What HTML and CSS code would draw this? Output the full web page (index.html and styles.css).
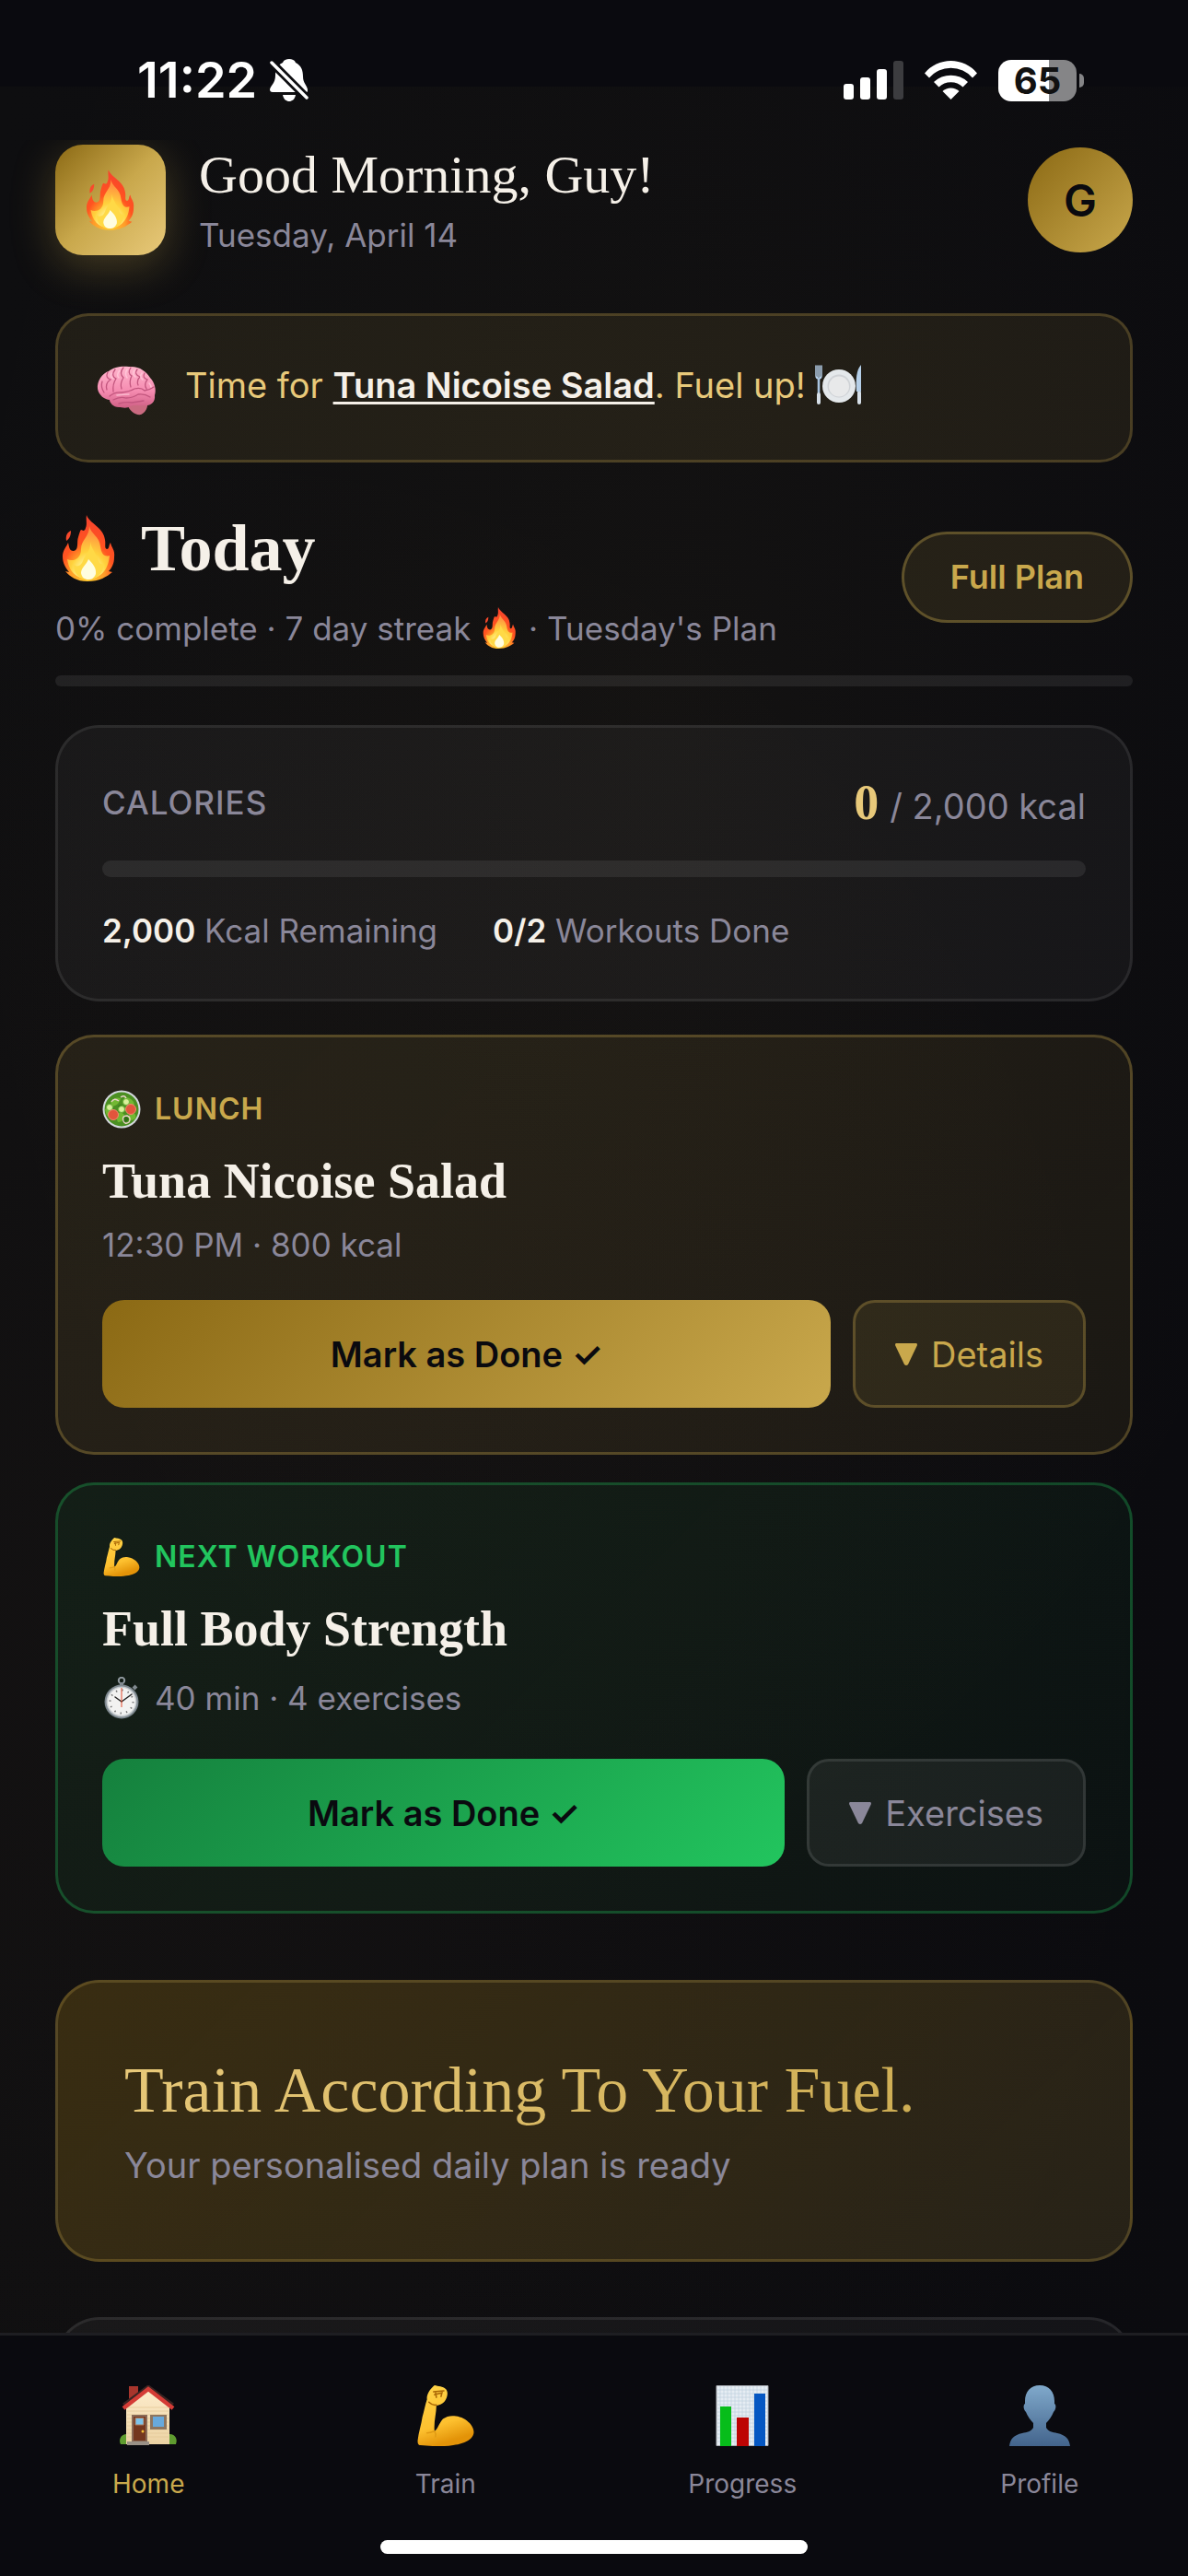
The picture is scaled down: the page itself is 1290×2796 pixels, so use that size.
FILE: index.html
```html
<!DOCTYPE html>
<html lang="en">

<head>
    <meta charset="UTF-8">
    <meta name="viewport" content="width=device-width, initial-scale=1.0">
    <title>Today</title>

    <link rel="stylesheet" href="styles.css">
</head>

<body>
    <!-- shared pictograms -->
    <svg class="defs" width="0" height="0" aria-hidden="true">
        <defs>
            <radialGradient id="fire-outer" cx="0.48" cy="0.92" r="0.85">
                <stop offset="0" stop-color="#ffd030" />
                <stop offset="0.4" stop-color="#ff9a28" />
                <stop offset="0.6" stop-color="#ff5420" />
                <stop offset="1" stop-color="#f8442c" />
            </radialGradient>
            <radialGradient id="fire-inner" cx="0.5" cy="0.93" r="0.8">
                <stop offset="0" stop-color="#fffff0" />
                <stop offset="0.25" stop-color="#fff59a" />
                <stop offset="0.55" stop-color="#ffd23c" />
                <stop offset="1" stop-color="#ff9440" />
            </radialGradient>
            <linearGradient id="skin" x1="0" y1="0" x2="0.3" y2="1">
                <stop offset="0" stop-color="#ffd54a" />
                <stop offset="0.7" stop-color="#fdc02f" />
                <stop offset="1" stop-color="#e39308" />
            </linearGradient>
            <linearGradient id="brain-fill" x1="0" y1="0" x2="0" y2="1">
                <stop offset="0" stop-color="#ffb6cd" />
                <stop offset="0.6" stop-color="#f58bb0" />
                <stop offset="1" stop-color="#cf5f85" />
            </linearGradient>
            <linearGradient id="bust" x1="0" y1="0" x2="0" y2="1">
                <stop offset="0" stop-color="#80a9cb" />
                <stop offset="1" stop-color="#43648c" />
            </linearGradient>
            <linearGradient id="wall" x1="0" y1="0" x2="0" y2="1">
                <stop offset="0" stop-color="#fdeccb" />
                <stop offset="1" stop-color="#ecd3a4" />
            </linearGradient>
        </defs>
        <symbol id="fire" viewBox="0 0 57 72">
            <path fill="url(#fire-outer)" d="M26 0C29 9 45 14 46 27C47 32 45 36 48 37C51 37 50 32 52 30C53 36 57 37 56 46C56 53 53 58 50 61L54 62C48 67 40 72 27 72C15 72 8 67 3 61L7 62C3 57 0 52 0 45C0 38 4 35 6 30C7 34 7 39 12 39C18 38 15 29 17 24C18 20 19 17 20 16C22 17 24 18 25 14C27 10 25 5 26 0Z" />
            <path fill="#f8492c" d="M9 17C5 19 3 22 4 28C7 26 9 23 9 17Z" />
            <path fill="url(#fire-inner)" d="M29 12C30 20 40 23 41 34C42 42 45 46 51 44C50 56 44 69 28 69C13 69 7 60 5 48C11 51 20 48 20 37C20 27 29 24 29 12Z" />
            <path fill="#ffd946" d="M30 29C31 37 38 43 39 50C41 55 45 53 45 53C44 63 38 70 28 70C18 70 12 64 12 54C16 57 20 55 22 50C24 43 31 39 30 29Z" />
            <path fill="#fffde0" d="M28 48C32 52 37 57 36 64C34 69 31 70 28 70C24 70 21 68 20 63C20 57 26 54 28 48Z" />
        </symbol>
        <symbol id="bicep" viewBox="0 0 60 65">
            <path fill="url(#skin)" d="M18 0C22 1 27 1 30 4C33 7 32 13 29 17C26 21 22 21 20 22C20 30 17 40 18 49C21 48 23 40 27 36C31 33 36 32 41 33C50 34 60 42 60 50C60 58 49 63 38 64C26 66 13 65 3 64C0 64 0 61 0 59C1 50 4 42 5 34C7 27 8 21 10 15C9 10 14 3 18 0Z" />
            <path fill="none" stroke="#a86404" stroke-width="1.5" stroke-linecap="round" d="M17 7L28 6M18 10L26 8L25 12M19 7L20 13M12 18Q16 22 20 21" />
            <path fill="none" stroke="#e09a14" stroke-width="1.5" stroke-linecap="round" d="M18 49Q13 51 10 51M18 49Q20 52 19 55" />
        </symbol>
        <symbol id="brain" viewBox="0 0 66 60">
            <path fill="#c96a80" d="M33 46C35 54 42 59 48 58C53 56 56 50 55 44Z" />
            <path fill="url(#brain-fill)" d="M1 30C0 22 6 13 13 11C18 6 28 5 35 6C46 5 54 11 58 18C63 23 65 31 63 37C64 45 58 49 51 48C46 49 41 47 37 49C32 52 27 50 24 50C18 50 14 45 14 42C9 42 2 37 1 30Z" />
            <path fill="none" stroke="#c2567e" stroke-width="1.3" stroke-linecap="round" d="M12 12Q9 18 15 20Q9 24 11 31M20 9Q15 16 21 19Q17 25 18 33M29 7Q24 13 29 18Q25 24 27 30M37 7Q33 13 38 16Q35 22 37 28M44 9Q40 14 47 17Q43 21 45 26M52 13Q49 18 55 20Q51 25 54 30M14 38Q20 33 27 34Q36 33 41 30Q48 28 52 32Q58 31 62 28M18 42Q25 38 32 40Q39 40 45 36Q52 35 58 39M24 46Q32 44 38 45Q45 44 51 43M6 22Q4 28 8 34" />
            <path fill="none" stroke="#ffd0de" stroke-width="1.6" stroke-linecap="round" opacity="0.7" d="M16 13Q14 17 18 19M25 10Q21 15 24 18M33 9Q30 14 33 18M41 10Q38 14 42 17M49 13Q46 17 50 20M22 37Q30 36 35 36M57 24Q59 26 59 28" />
        </symbol>
        <symbol id="plate" viewBox="0 0 52 44">
            <circle cx="26" cy="23" r="18" fill="#e4e8eb" />
            <circle cx="26" cy="23" r="12.5" fill="#cfd2d6" />
            <circle cx="26" cy="23.5" r="11" fill="#e8e9ea" />
            <path fill="none" stroke="#b9d3ee" stroke-width="1.4" stroke-linecap="round" d="M1 1V12Q1 15 4 15Q7 15 7 12V1M3 1V14M5 1V14" />
            <path fill="none" stroke="#a9c4e0" stroke-width="2.6" stroke-linecap="round" d="M4 16V30" />
            <path fill="none" stroke="#d6dfe8" stroke-width="4" stroke-linecap="round" d="M4 32V41M48 30V41" />
            <path fill="#b5cfe8" d="M50 0C45 5 44 16 45 29H50Z" />
        </symbol>
        <symbol id="salad" viewBox="0 0 42 42">
            <circle cx="21" cy="21" r="20.5" fill="#d4d8dd" />
            <circle cx="21" cy="21" r="18.5" fill="#4b8f22" />
            <path fill="#72b832" d="M9 13Q14 7 20 9Q19 16 11 18ZM24 8Q33 8 35 16Q28 19 24 13ZM14 27Q20 22 24 27Q24 35 17 35ZM30 25Q38 24 36 31Q31 35 28 31ZM3 21Q9 18 10 23Q9 28 5 28Z" />
            <path fill="#2f6f16" d="M17 18Q21 14 23 19Q20 22 17 18ZM22 31Q26 27 29 31Q27 36 22 35ZM8 18Q12 18 13 22Q10 23 8 18Z" />
            <g fill="#d8f09a" stroke="#6bb03a">
                <circle cx="8" cy="19" r="3.5" />
                <circle cx="26" cy="13" r="3.5" />
                <circle cx="21" cy="21" r="3.5" />
            </g>
            <g fill="#e2553c" stroke="#f08a6a">
                <circle cx="12" cy="27" r="5.5" />
                <circle cx="31" cy="21" r="5.5" />
            </g>
            <path fill="none" stroke="#ecd3cb" stroke-width="1.4" d="M10 13Q13 8 18 12M20 8Q24 5 26 9M23 34Q21 28 27 28Q32 30 29 35Q25 38 23 34" />
        </symbol>
        <symbol id="stopwatch" viewBox="0 0 40 46">
            <circle cx="20" cy="4" r="3.2" fill="none" stroke="#8f989e" stroke-width="2" />
            <path fill="none" stroke="#818a90" stroke-width="4" d="M20 6V10M33 13L36 10" />
            <circle cx="20" cy="27" r="18.5" fill="#7d878e" />
            <circle cx="20" cy="27" r="16.5" fill="#c5cacd" />
            <circle cx="20" cy="27" r="15" fill="#f2f2f1" />
            <circle cx="20" cy="27" r="12.5" fill="none" stroke="#777" stroke-width="2" stroke-dasharray="1.4 5.14" />
            <path fill="none" stroke="#222" stroke-width="1.5" stroke-linecap="round" d="M20 27L13 22M20 27L31 19" />
            <path fill="none" stroke="#e5482a" d="M20 33V12" />
        </symbol>
        <symbol id="house" viewBox="0 0 66 66">
            <path fill="#a8352c" d="M12 1H22V14L12 21Z" />
            <path fill="url(#wall)" d="M9 22L33 5L56 22V64H9Z" />
            <path fill="none" stroke="#e2c595" stroke-width="0.7" d="M10 24H55M10 28H55M10 32H55M10 36H55M10 40H55M10 44H55M10 48H55M10 52H55M10 56H55" />
            <path fill="none" stroke="#3a2422" stroke-width="3" d="M6 21L33 1L60 21" />
            <path fill="none" stroke="#d43c36" stroke-width="4.5" d="M6 25L33 4L60 25" />
            <path fill="#8a6b58" d="M15 32H32V61H15Z" />
            <path fill="#74371f" d="M17 34H30V60H17Z" />
            <path fill="#7ec3ea" stroke="#a9795a" d="M19 35.500H28V43H19Z" />
            <circle cx="27" cy="50" r="1.500" fill="#f3c03a" />
            <path fill="#8d755f" d="M35 32H53V48H35Z" />
            <path fill="#68a9dc" d="M38 34H50V45H38Z" />
            <path fill="#9a9187" d="M10 61H34V65H10Z" />
            <path fill="#5f9c30" d="M9 53V64H3C1 60 2 54 9 53ZM56 53V64H63C65 59 63 53 56 53Z" />
        </symbol>
        <symbol id="chart" viewBox="0 0 66 66">
            <path fill="#e6edf3" stroke="#a9adb3" d="M5 0.500H61V65.500H5Z" />
            <path fill="none" stroke="#c3d3df" stroke-width="0.8" d="M9 1V65M13 1V65M17 1V65M21 1V65M25 1V65M29 1V65M33 1V65M37 1V65M41 1V65M45 1V65M49 1V65M53 1V65M57 1V65M6 5H60M6 9H60M6 13H60M6 17H60M6 21H60M6 25H60M6 29H60M6 33H60M6 37H60M6 41H60M6 45H60M6 49H60M6 53H60M6 57H60M6 61H60" />
            <path fill="#07bd1a" d="M9 23H21V66H9Z" />
            <path fill="#bd0404" d="M27 35H40V66H27Z" />
            <path fill="#0557c2" d="M46 9H58V66H46Z" />
        </symbol>
        <symbol id="person" viewBox="0 0 66 66">
            <path fill="url(#bust)" d="M33 0C43 0 49 7 49 17V20C51 21 51 26 48 29C46 34 43 38 40 41V46C42 50 47 51 52 52C61 54 65 58 66 66H0C1 58 5 54 14 52C19 51 24 50 26 46V41C23 38 20 34 18 29C15 26 15 21 17 20V17C17 7 23 0 33 0Z" />
        </symbol>
    </svg>

    <div class="statusbar">
        <div class="status-group">
            <time class="clock">11:22</time>
            <svg class="bell" viewBox="0 0 42 46" fill="#fff" role="img" aria-label="Silent">
                <path d="M14 4C15 1 18 0 21 0C24 0 27 1 28 4C34 7 36 12 36 19C36 26 40 28 41 33C41 35 41 36 40 36H3C1 36 0 35 0 33C1 29 6 26 6 18C6 11 9 6 14 4Z" />
                <path d="M14 39H28C27 44 24 46 21 46C18 46 15 44 14 39Z" />
                <path stroke="#0c0c0f" stroke-width="9" d="M2 4L40 42" />
                <path stroke="#fff" stroke-width="3.500" stroke-linecap="round" d="M2 4L40 42" />
            </svg>
        </div>
        <div class="status-group status-right">
            <svg class="signal" viewBox="0 0 65 42" fill="#fff" role="img" aria-label="Signal">
                <rect y="25" width="11" height="17" rx="3" />
                <rect x="18" y="18" width="11" height="24" rx="3" />
                <rect x="36" y="9" width="11" height="33" rx="3" />
                <rect x="54" width="11" height="42" rx="3" fill="#3c3c3f" />
            </svg>
            <svg class="wifi" viewBox="0 0 57 42" fill="#fff" role="img" aria-label="Wi-Fi">
                <path d="M0 13.500A37 37 0 0 1 57 13.500L52 18.500A31 31 0 0 0 5 18.500Z" />
                <path d="M10 23A27 27 0 0 1 47 23L41.500 28.500A19 19 0 0 0 15.500 28.500Z" />
                <path d="M19.500 33A13 13 0 0 1 37.500 33L28.500 42Z" />
            </svg>
            <div class="battery"><span class="battery-level">65</span></div>
        </div>
    </div>

    <main>
        <header class="greeting">
            <div class="logo"><svg class="logo-icon"><use href="#fire" /></svg></div>
            <div class="greeting-text">
                <h1>Good Morning, Guy!</h1>
                <p class="muted">Tuesday, April 14</p>
            </div>
            <button class="avatar" type="button" aria-label="Account">G</button>
        </header>

        <section class="tip">
            <svg class="tip-icon"><use href="#brain" /></svg>
            <p>Time for <a href="#lunch">Tuna Nicoise Salad</a>. Fuel up! <svg class="plate"><use href="#plate" /></svg></p>
        </section>

        <section class="today">
            <div class="today-text">
                <h2><svg class="today-icon"><use href="#fire" /></svg>Today</h2>
                <p class="muted">0% complete · 7 day streak <svg class="streak-icon"><use href="#fire" /></svg> · Tuesday's Plan</p>
            </div>
            <button class="full-plan" type="button">Full Plan</button>
        </section>
        <div class="progress" role="progressbar" aria-valuenow="0" aria-label="Day progress"></div>

        <section class="card calories">
            <div class="calories-head">
                <span class="calories-label">CALORIES</span>
                <div class="calories-value"><strong>0</strong><span>/ 2,000 kcal</span></div>
            </div>
            <div class="calories-bar" role="progressbar" aria-valuenow="0" aria-label="Calories eaten"></div>
            <div class="stats">
                <span><b>2,000</b> Kcal Remaining</span>
                <span><b>0/2</b> Workouts Done</span>
            </div>
        </section>

        <section class="card lunch" id="lunch">
            <p class="label"><svg class="label-icon"><use href="#salad" /></svg>LUNCH</p>
            <h3>Tuna Nicoise Salad</h3>
            <p class="meta">12:30 PM · 800 kcal</p>
            <div class="actions">
                <button class="done" type="button">Mark as Done ✓</button>
                <button class="more" type="button"><svg class="triangle" viewBox="0 0 24 24"><path d="M1 0H23Q24 0 24 2L14 23Q12 25 10 23L0 2Q0 0 1 0Z" /></svg>Details</button>
            </div>
        </section>

        <section class="card workout">
            <p class="label"><svg class="label-icon"><use href="#bicep" /></svg>NEXT WORKOUT</p>
            <h3>Full Body Strength</h3>
            <p class="meta meta-icon"><svg class="watch"><use href="#stopwatch" /></svg>40 min · 4 exercises</p>
            <div class="actions">
                <button class="done" type="button">Mark as Done ✓</button>
                <button class="more" type="button"><svg class="triangle" viewBox="0 0 24 24"><path d="M1 0H23Q24 0 24 2L14 23Q12 25 10 23L0 2Q0 0 1 0Z" /></svg>Exercises</button>
            </div>
        </section>

        <section class="hero">
            <h2>Train According To Your Fuel.</h2>
            <p>Your personalised daily plan is ready</p>
        </section>

        <section class="card next-card"></section>
    </main>

    <nav class="tabbar">
        <div class="tabs">
            <a class="active" href="#home"><svg><use href="#house" /></svg>Home</a>
            <a href="#train"><svg><use href="#bicep" /></svg>Train</a>
            <a href="#progress"><svg><use href="#chart" /></svg>Progress</a>
            <a href="#profile"><svg><use href="#person" /></svg>Profile</a>
        </div>
        <div class="home-indicator"></div>
    </nav>
</body>

</html>
```
FILE: styles.css
```css
:root {
    --bg: #0a0a0f;
    --cream: #f5f0e8;
    --muted: #8a8799;
    --gold: #c9a84c;
    --gold-light: #e8c97a;
    --gold-dark: #8b6914;
    --green: #22c55e;
    --serif: 'Liberation Serif', 'Times New Roman', serif;
}

* {
    box-sizing: border-box;
    margin: 0;
}

body {
    display: flex;
    flex-direction: column;
    height: 100vh;
    overflow: hidden;
    font-family: Inter, sans-serif;
    font-size: 35px;
    line-height: 54px;
    color: var(--cream);
    background:
        linear-gradient(var(--bg), var(--bg)) 0 0 / 100% 94px no-repeat,
        radial-gradient(ellipse 60% 45% at 55% 28%, rgba(201, 168, 76, 0.04), transparent),
        radial-gradient(ellipse 80% 50% at 20% 65%, rgba(201, 140, 76, 0.03), transparent),
        linear-gradient(90deg, #0e0e10, #0b0b0f);
}

button {
    font-family: inherit;
    cursor: pointer;
}

svg {
    flex: none;
}

.defs {
    position: absolute;
}

.muted {
    color: var(--muted);
}

/* status bar */

.statusbar {
    flex: none;
    display: flex;
    justify-content: space-between;
    align-items: center;
    height: 152px;
    padding: 22px 113px 0 149px;
}

.status-group {
    display: flex;
    align-items: center;
    gap: 14px;
}

.status-right {
    gap: 23px;
}

.clock {
    font-size: 54px;
    font-weight: 600;
    color: #fff;
}

.bell {
    width: 42px;
    height: 46px;
}

.signal {
    width: 65px;
    height: 42px;
}

.wifi {
    width: 57px;
    height: 42px;
}

.battery {
    display: flex;
    align-items: center;
    gap: 3px;
}

.battery-level {
    width: 85px;
    border-radius: 14px;
    background: linear-gradient(90deg, #fff 65%, #858587 65%);
    color: #111;
    font-size: 40px;
    font-weight: 700;
    line-height: 45px;
    text-align: center;
}

.battery::after {
    content: '';
    width: 5px;
    height: 15px;
    border-radius: 0 6px 6px 0;
    background: #858587;
}

/* page */

main {
    flex: 1;
    min-height: 0;
    overflow: hidden;
    padding: 0 60px;
}

.greeting {
    display: flex;
    align-items: center;
    gap: 36px;
    margin-bottom: 58px;
}

.logo {
    display: grid;
    place-items: center;
    width: 120px;
    height: 120px;
    border-radius: 30px;
    background: linear-gradient(135deg, var(--gold-dark), var(--gold) 50%, var(--gold-light));
    box-shadow: 0 12px 48px rgba(201, 168, 76, 0.3);
}

.logo-icon {
    width: 52px;
    height: 66px;
}

.greeting-text {
    flex: 1;
}

h1 {
    font: 400 58px/76px var(--serif);
}

.avatar {
    width: 114px;
    height: 114px;
    border: 0;
    border-radius: 50%;
    background: linear-gradient(135deg, var(--gold-dark), var(--gold));
    color: var(--bg);
    font-size: 48px;
    font-weight: 600;
}

.tip {
    display: flex;
    gap: 30px;
    padding: 45px 42px 43px;
    border: 3px solid rgba(201, 168, 76, 0.25);
    border-radius: 36px;
    background: rgba(201, 168, 76, 0.1);
    color: var(--gold-light);
    font-size: 38px;
    line-height: 60px;
}

.tip a {
    color: var(--cream);
    font-weight: 600;
    text-underline-offset: 4px;
    text-decoration-thickness: 3px;
}

.tip-icon {
    width: 66px;
    height: 68px;
}

.plate {
    width: 52px;
    height: 44px;
    vertical-align: -8px;
}

.today {
    display: flex;
    justify-content: space-between;
    align-items: center;
    margin-top: 42px;
}

.today-text {
    padding-top: 8px;
}

.today h2 {
    display: flex;
    align-items: center;
    gap: 27px;
    margin-bottom: 17px;
    padding-left: 7px;
    font: 700 72px/86px var(--serif);
}

.today-icon {
    width: 59px;
    height: 72px;
}

.streak-icon {
    width: 37px;
    height: 45px;
    margin: 0 3px;
    vertical-align: -9px;
}

.full-plan {
    padding: 0 50px;
    border: 3px solid rgba(201, 168, 76, 0.35);
    border-radius: 60px;
    background: rgba(201, 168, 76, 0.12);
    color: var(--gold);
    font-size: 36px;
    font-weight: 600;
    line-height: 93px;
}

.progress {
    height: 12px;
    margin: 24px 0 42px;
    border-radius: 6px;
    background: rgba(255, 255, 255, 0.08);
}

/* cards */

.card {
    padding: 48px;
    border: 3px solid rgba(255, 255, 255, 0.08);
    border-radius: 42px;
    background: rgba(255, 255, 255, 0.04);
}

.calories,
.next-card {
    border-radius: 48px;
}

.calories-head {
    display: flex;
    justify-content: space-between;
    align-items: center;
}

.calories-label {
    color: var(--muted);
    font-weight: 500;
    letter-spacing: 1px;
}

.calories-value {
    display: flex;
    align-items: baseline;
    gap: 12px;
    height: 66px;
    color: var(--muted);
    font-size: 38px;
}

.calories-value strong {
    color: var(--gold-light);
    font: 700 54px/66px var(--serif);
}

.calories-bar {
    height: 18px;
    margin: 30px 0 33px;
    border-radius: 9px;
    background: rgba(255, 255, 255, 0.08);
}

.stats {
    display: flex;
    gap: 60px;
    color: var(--muted);
    line-height: 51px;
}

.stats b {
    color: var(--cream);
    font-weight: 600;
}

.lunch {
    margin-top: 36px;
    border-color: rgba(201, 168, 76, 0.3);
    background: linear-gradient(135deg, rgba(201, 168, 76, 0.11), rgba(201, 168, 76, 0.08));
}

.workout {
    margin-top: 30px;
    border-color: rgba(34, 197, 94, 0.3);
    background: linear-gradient(135deg, rgba(34, 197, 94, 0.08), rgba(34, 197, 94, 0.04));
}

.label {
    display: flex;
    align-items: center;
    gap: 15px;
    margin-bottom: 15px;
    color: var(--gold);
    font-size: 32px;
    font-weight: 600;
    letter-spacing: 1px;
    line-height: 60px;
}

.workout .label {
    color: var(--green);
}

.label-icon {
    width: 42px;
    height: 42px;
}

.card h3 {
    font: 700 54px/66px var(--serif);
}

.meta {
    margin: 9px 0 33px;
    color: var(--muted);
}

.meta-icon {
    display: flex;
    align-items: center;
    gap: 15px;
    line-height: 66px;
}

.watch {
    width: 42px;
    height: 46px;
}

.actions {
    display: flex;
    gap: 24px;
}

.done,
.more {
    height: 117px;
    border-radius: 24px;
    font-size: 38px;
}

.done {
    flex: 1;
    border: 0;
    background: linear-gradient(135deg, var(--gold-dark), var(--gold));
    color: var(--bg);
    font-weight: 600;
}

.workout .done {
    background: linear-gradient(135deg, #15803d, var(--green));
}

.more {
    display: flex;
    align-items: center;
    gap: 15px;
    padding: 0 43px;
    border: 3px solid rgba(201, 168, 76, 0.3);
    background: rgba(201, 168, 76, 0.1);
    color: var(--gold);
}

.workout .more {
    border-color: rgba(255, 255, 255, 0.1);
    background: rgba(255, 255, 255, 0.06);
    color: var(--muted);
}

.triangle {
    width: 24px;
    height: 24px;
    fill: currentColor;
}

.hero {
    margin: 72px 0 60px;
    padding: 75px 72px;
    border: 3px solid rgba(201, 168, 76, 0.25);
    border-radius: 48px;
    background: linear-gradient(135deg, rgba(139, 105, 20, 0.32), rgba(201, 168, 76, 0.15));
    color: var(--muted);
    font-size: 38px;
}

.hero h2 {
    margin-bottom: 12px;
    font: 400 70px/84px var(--serif);
    background: linear-gradient(135deg, var(--gold-light), var(--gold));
    background-clip: text;
    color: transparent;
}

.next-card {
    height: 300px;
}

/* bottom tabs */

.tabbar {
    flex: none;
    padding: 54px 0 24px;
    border-top: 3px solid #1e1e22;
    background: var(--bg);
}

.tabs {
    display: grid;
    grid-template-columns: repeat(4, 1fr);
}

.tabs a {
    display: flex;
    flex-direction: column;
    align-items: center;
    gap: 20px;
    color: var(--muted);
    font-size: 28px;
    line-height: 42px;
    text-decoration: none;
}

.tabs a.active {
    color: var(--gold);
}

.tabs svg {
    width: 66px;
    height: 66px;
}

.home-indicator {
    width: 36%;
    height: 15px;
    margin: 40px auto 0;
    border-radius: 8px;
    background: #fff;
}
```
